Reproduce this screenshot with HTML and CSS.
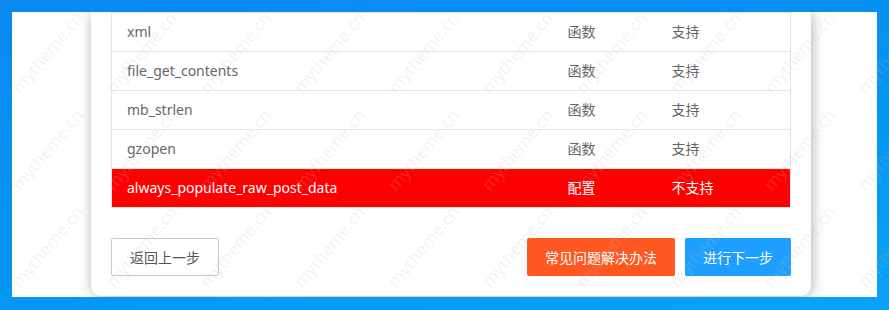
FILE: index.html
```html
<!DOCTYPE html>
<html lang="zh-CN">
<head>
    <meta charset="UTF-8">
    <title>环境检测</title>
    <link rel="stylesheet" href="styles.css">
</head>
<body>
    <div class="window">
        <div class="card">
            <table class="check-table">
                <colgroup>
                    <col class="col-name">
                    <col class="col-type">
                    <col class="col-state">
                </colgroup>
                <tr><td>xml</td><td>函数</td><td>支持</td></tr>
                <tr><td>file_get_contents</td><td>函数</td><td>支持</td></tr>
                <tr><td>mb_strlen</td><td>函数</td><td>支持</td></tr>
                <tr><td>gzopen</td><td>函数</td><td>支持</td></tr>
                <tr class="fail"><td>always_populate_raw_post_data</td><td>配置</td><td>不支持</td></tr>
            </table>
            <div class="actions">
                <button class="btn">返回上一步</button>
                <span class="spacer"></span>
                <button class="btn btn-warm">常见问题解决办法</button>
                <button class="btn btn-normal">进行下一步</button>
            </div>
        </div>
    </div>

    <div class="watermark" id="watermark"></div>

    <script>
        const wm = document.getElementById('watermark');
        for (let i = 0; i < 30; i++) {
            const s = document.createElement('span');
            s.innerText = 'mytheme.cn';
            wm.appendChild(s);
        }
    </script>
</body>
</html>
```

FILE: styles.css
```css
html, body {
    margin: 0;
    height: 100%;
}
body {
    background: linear-gradient(170deg, #0a8aef 0%, #0396f2 60%, #0aa3f6 100%);
    font-family: "Segoe UI", "Noto Sans", "Noto Sans CJK SC", sans-serif;
    font-size: 14px;
    color: #666;
    overflow: hidden;
    position: relative;
}
.window {
    margin: 12px 12px 0 12px;
    width: 865px;
    height: 285px;
    background: #fff;
    overflow: hidden;
}
.card {
    width: 680px;
    margin-left: 79px;
    padding: 0 20px 20px 20px;
    background: #fff;
    border-radius: 0 0 10px 10px;
    box-shadow: 1px 1px 13px rgba(0, 0, 0, 0.32);
}
.check-table {
    width: 680px;
    border-collapse: collapse;
    table-layout: fixed;
}
.col-name { width: 441px; }
.col-type { width: 104px; }
.check-table td {
    height: 38px;
    padding: 0 15px;
    border-top: 1px solid #e6e6e6;
    border-bottom: 1px solid #e6e6e6;
    line-height: 20px;
    white-space: nowrap;
}
.check-table td:first-child { border-left: 1px solid #e6e6e6; }
.check-table td:last-child { border-right: 1px solid #e6e6e6; }
.check-table tr.fail td {
    background: #ff0000;
    color: #fff;
}
.actions {
    display: flex;
    gap: 10px;
    margin-top: 30px;
}
.spacer { flex: 1; }
.btn {
    height: 38px;
    padding: 0 18px;
    border: 1px solid #c9c9c9;
    border-radius: 2px;
    background: #fff;
    color: #555;
    font-family: "Noto Sans CJK SC", sans-serif;
    font-size: 14px;
    cursor: pointer;
}
.btn-warm {
    border: none;
    background: #ff5722;
    color: #fff;
}
.btn-normal {
    border: none;
    background: #1e9fff;
    color: #fff;
}
.watermark {
    position: absolute;
    top: 0;
    left: 0;
    right: 0;
    bottom: 0;
    padding-top: 4px;
    overflow: hidden;
    display: grid;
    grid-template-columns: repeat(10, 94px);
    grid-auto-rows: 97px;
    pointer-events: none;
}
.watermark span {
    display: flex;
    align-items: center;
    justify-content: center;
    transform: rotate(-50deg);
    font-family: "Segoe UI", "Noto Sans", sans-serif;
    font-size: 17px;
    color: rgba(190, 190, 190, 0.2);
}
```
